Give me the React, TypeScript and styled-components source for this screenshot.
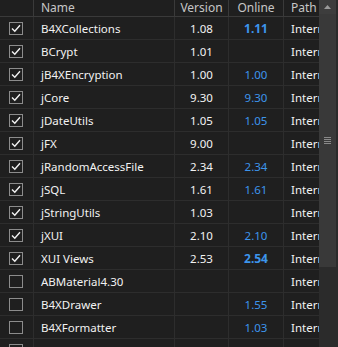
import React from "react";
import styled, { createGlobalStyle } from "styled-components";

const Global = createGlobalStyle`
  html, body { margin: 0; padding: 0; background: #1f1f1f; overflow: hidden; }
  #root { width: 338px; height: 347px; }
`;

const Frame = styled.div`
  display: flex;
  width: 338px;
  height: 347px;
  overflow: hidden;
  background: #1f1f1f;
  font-family: "Noto Sans", "Segoe UI", sans-serif;
  font-size: 11.5px;
`;

const Table = styled.div`
  width: 319px;
  display: grid;
  grid-template-columns: 34px 141px 54px 55px 35px;
  grid-auto-rows: 23px;
  grid-template-rows: 17px;
  align-content: start;
`;

const HeadCell = styled.div<{ $align?: string; $last?: boolean }>`
  box-sizing: border-box;
  height: 17px;
  border-bottom: 1px solid #3a3a3a;
  border-right: ${(p) => (p.$last ? "none" : "1px solid #3a3a3a")};
  color: #c6c6c6;
  font-size: 12px;
  display: flex;
  align-items: center;
  justify-content: ${(p) => p.$align || "flex-start"};
  padding: ${(p) => (p.$align === "center" ? "0 0 1px 0" : "0 0 1px 7px")};
  white-space: nowrap;
  overflow: hidden;
  line-height: 1;
`;

const Cell = styled.div<{ $align?: string; $last?: boolean; $blue?: boolean; $bold?: boolean }>`
  box-sizing: border-box;
  height: 23px;
  border-bottom: 1px solid #2d2d2d;
  border-right: ${(p) => (p.$last ? "none" : "1px solid #2d2d2d")};
  color: ${(p) => (p.$blue ? "#3d95ec" : "#f2f2f2")};
  font-weight: ${(p) => (p.$bold ? 700 : 400)};
  font-size: ${(p) => (p.$bold ? "12px" : "11.5px")};
  display: flex;
  align-items: center;
  justify-content: ${(p) => p.$align || "flex-start"};
  padding: ${(p) => (p.$align === "center" ? "0" : "0 0 0 7px")};
  white-space: nowrap;
  overflow: hidden;
`;

const BoxCell = styled(Cell)`
  padding: 0 0 0 9px;
`;

const Box = styled.div`
  box-sizing: border-box;
  width: 14px;
  height: 13px;
  border: 1px solid #8c8c8c;
  display: flex;
  align-items: center;
  justify-content: center;
`;

const Scroll = styled.div`
  width: 19px;
  height: 347px;
  background: #2b2b2b;
  display: flex;
  flex-direction: column;
  padding-right: 2px;
  box-sizing: border-box;
`;

const Arrow = styled.div`
  height: 14px;
  background: #3d3d3d;
  display: flex;
  align-items: center;
  justify-content: center;
`;

const Thumb = styled.div`
  height: 253px;
  background: #393939;
  display: flex;
  align-items: center;
  justify-content: center;
`;

const Grip = styled.div`
  display: flex;
  flex-direction: column;
  gap: 1px;
`;

const GripLine = styled.div`
  width: 7px;
  height: 1px;
  background: #8a8a8a;
`;

type Row = { name: string; ver: string; online: string; checked: boolean; bold?: boolean };

const rows: Row[] = [
  { name: "B4XCollections", ver: "1.08", online: "1.11", checked: true, bold: true },
  { name: "BCrypt", ver: "1.01", online: "", checked: true },
  { name: "jB4XEncryption", ver: "1.00", online: "1.00", checked: true },
  { name: "jCore", ver: "9.30", online: "9.30", checked: true },
  { name: "jDateUtils", ver: "1.05", online: "1.05", checked: true },
  { name: "jFX", ver: "9.00", online: "", checked: true },
  { name: "jRandomAccessFile", ver: "2.34", online: "2.34", checked: true },
  { name: "jSQL", ver: "1.61", online: "1.61", checked: true },
  { name: "jStringUtils", ver: "1.03", online: "", checked: true },
  { name: "jXUI", ver: "2.10", online: "2.10", checked: true },
  { name: "XUI Views", ver: "2.53", online: "2.54", checked: true, bold: true },
  { name: "ABMaterial4.30", ver: "", online: "", checked: false },
  { name: "B4XDrawer", ver: "", online: "1.55", checked: false },
  { name: "B4XFormatter", ver: "", online: "1.03", checked: false },
  { name: "B4XPages", ver: "", online: "1.10", checked: false },
];

const Check = () => (
  <svg width="10" height="9" viewBox="0 0 10 9">
    <path d="M1 4.5 L3.8 7.3 L9 1.2" fill="none" stroke="#f2f2f2" strokeWidth="1.4" />
  </svg>
);

export default function App() {
  return (
    <>
      <Global />
      <Frame>
        <Table>
          <HeadCell />
          <HeadCell>Name</HeadCell>
          <HeadCell $align="center">Version</HeadCell>
          <HeadCell $align="center">Online</HeadCell>
          <HeadCell $last>Path</HeadCell>
          {rows.map((r) => (
            <React.Fragment key={r.name}>
              <BoxCell>
                <Box>{r.checked && <Check />}</Box>
              </BoxCell>
              <Cell>{r.name}</Cell>
              <Cell $align="center">{r.ver}</Cell>
              <Cell $align="center" $blue $bold={r.bold}>{r.online}</Cell>
              <Cell $last>Internal</Cell>
            </React.Fragment>
          ))}
        </Table>
        <Scroll>
          <Arrow>
            <svg width="7" height="4" viewBox="0 0 7 4">
              <path d="M0 4 L3.5 0 L7 4 Z" fill="#9a9a9a" />
            </svg>
          </Arrow>
          <Thumb>
            <Grip>
              <GripLine />
              <GripLine />
              <GripLine />
              <GripLine />
            </Grip>
          </Thumb>
        </Scroll>
      </Frame>
    </>
  );
}
